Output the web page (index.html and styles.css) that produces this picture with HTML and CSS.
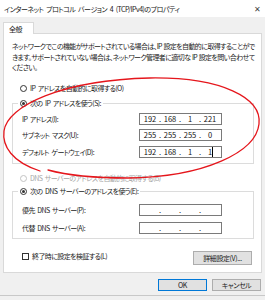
FILE: index.html
```html
<!DOCTYPE html>
<html lang="ja">
<head>
    <meta charset="UTF-8">
    <title>インターネット プロトコル バージョン 4 (TCP/IPv4)のプロパティ</title>
    <link rel="stylesheet" href="styles.css">
</head>
<body>
<div class="dialog">
    <div class="titlebar">
        <span class="title">インターネット プロトコル バージョン 4 (TCP/IPv4)のプロパティ</span>
        <span class="close">✕</span>
    </div>

    <div class="tabs">
        <div class="tab">全般</div>
    </div>

    <div class="panel">
        <p class="desc">ネットワークでこの機能がサポートされている場合は、IP 設定を自動的に取得することができます。サポートされていない場合は、ネットワーク管理者に適切な IP 設定を問い合わせてください。</p>

        <div class="option"><span class="radio"></span>IP アドレスを自動的に取得する(O)</div>

        <fieldset class="group group-ip">
            <legend class="option"><span class="radio checked"></span>次の IP アドレスを使う(S):</legend>
            <div class="row">
                <span class="label">IP アドレス(I):</span>
                <div class="ipbox"><span>192</span><i>.</i><span>168</span><i>.</i><span>1</span><i>.</i><span>221</span></div>
            </div>
            <div class="row">
                <span class="label">サブネット マスク(U):</span>
                <div class="ipbox"><span>255</span><i>.</i><span>255</span><i>.</i><span>255</span><i>.</i><span>0</span></div>
            </div>
            <div class="row">
                <span class="label">デフォルト ゲートウェイ(D):</span>
                <div class="ipbox"><span>192</span><i>.</i><span>168</span><i>.</i><span>1</span><i>.</i><span class="caret">1</span></div>
            </div>
        </fieldset>

        <div class="option disabled"><span class="radio"></span>DNS サーバーのアドレスを自動的に取得する(B)</div>

        <fieldset class="group group-dns">
            <legend class="option"><span class="radio checked"></span>次の DNS サーバーのアドレスを使う(E):</legend>
            <div class="row">
                <span class="label">優先 DNS サーバー(P):</span>
                <div class="ipbox"><span></span><i>.</i><span></span><i>.</i><span></span><i>.</i><span></span></div>
            </div>
            <div class="row">
                <span class="label">代替 DNS サーバー(A):</span>
                <div class="ipbox"><span></span><i>.</i><span></span><i>.</i><span></span><i>.</i><span></span></div>
            </div>
        </fieldset>

        <div class="bottom-row">
            <div class="option check-option"><span class="checkbox"></span>終了時に設定を検証する(L)</div>
            <button class="btn btn-detail">詳細設定(V)...</button>
        </div>
    </div>

    <div class="footer">
        <button class="btn btn-main default">OK</button>
        <button class="btn btn-main">キャンセル</button>
    </div>
    <div class="edge"></div>

    <svg class="mark" width="265" height="300" viewBox="0 0 265 300">
        <path d="M 40 171 C 12 162, 2 146, 4 131 C 7 106, 62 80, 150 78 C 222 77, 262 98, 259 124 C 256 152, 205 177, 128 178 C 100 178, 70 176, 48 170"
              fill="none" stroke="#e5161c" stroke-width="1.3" stroke-linecap="round"/>
    </svg>
</div>
</body>
</html>
```

FILE: styles.css
```css
* {
    margin: 0;
    padding: 0;
    box-sizing: border-box;
}

body {
    width: 265px;
    height: 300px;
    overflow: hidden;
    background: #f0f0f0;
    font-family: "Noto Sans CJK JP", "Noto Sans", sans-serif;
    font-size: 7px;
    letter-spacing: -0.6px;
    word-spacing: 1.5px;
    font-feature-settings: "palt";
    color: #1a1a1a;
}

.dialog {
    position: relative;
    height: 300px;
}

/* タイトルバー */
.titlebar {
    height: 17px;
    background: #fff;
    display: flex;
    align-items: center;
    justify-content: space-between;
    padding: 0 4px 0 4px;
}

.title {
    font-size: 7px;
    letter-spacing: -0.5px;
    color: #222;
}

.close {
    font-size: 8px;
    color: #444;
    margin-right: 1px;
}

/* タブ */
.tabs {
    display: flex;
    padding: 5px 0 0 3px;
}

.tab {
    width: 31px;
    height: 12px;
    margin-bottom: -1px;
    padding: 1px 0 0 5px;
    background: #fff;
    border: 1px solid #d9d9d9;
    border-bottom: none;
    position: relative;
    z-index: 1;
    line-height: 10px;
}

.panel {
    margin: 0 3px;
    height: 240px;
    background: #fff;
    border: 1px solid #d9d9d9;
    padding: 7px 0 0 0;
}

.desc {
    padding: 0 6px 0 8px;
    line-height: 10.5px;
    word-spacing: 0.5px;
}

/* ラジオ・チェック */
.option {
    display: flex;
    align-items: center;
    height: 11px;
    line-height: 11px;
    white-space: nowrap;
}

.panel > .option {
    padding-left: 16px;
}

.radio {
    width: 7px;
    height: 7px;
    border: 1px solid #333;
    border-radius: 50%;
    margin-right: 3px;
    display: flex;
    align-items: center;
    justify-content: center;
    background: #fff;
}

.radio.checked::after {
    content: "";
    width: 3px;
    height: 3px;
    border-radius: 50%;
    background: #333;
}

.disabled {
    color: #a6a6a6;
}

.disabled .radio {
    border-color: #c3c3c3;
}

.checkbox {
    width: 7px;
    height: 7px;
    border: 1px solid #333;
    margin-right: 3px;
}

.panel > .option:first-of-type {
    margin-top: 10px;
}

/* グループ */
.group {
    margin: 4px 7px 0 8px;
    border: 1px solid #dcdcdc;
    padding: 0 0 5px 0;
}

.group legend {
    margin-left: 5px;
    padding: 0 2px;
    background: #fff;
}

.group-ip {
    padding-top: 4px;
}

.group-dns {
    margin-top: 2px;
    padding-top: 7px;
    padding-bottom: 4px;
}

.disabled.option {
    margin-top: 9px;
}

.row {
    display: flex;
    align-items: center;
    justify-content: space-between;
    padding: 0 31px 0 9px;
    height: 12px;
}

.row + .row {
    margin-top: 4.5px;
}

.group-dns .row + .row {
    margin-top: 6px;
}

.ipbox {
    width: 83px;
    height: 12px;
    border: 1px solid #7a7a7a;
    display: flex;
    align-items: center;
    padding-left: 2px;
    font-size: 7.5px;
    letter-spacing: 0;
    word-spacing: 0;
    line-height: 10px;
    color: #111;
}

.ipbox span {
    width: 16px;
    text-align: center;
}

.ipbox i {
    font-style: normal;
    width: 4px;
    text-align: center;
}

.caret {
    position: relative;
}

.caret::after {
    content: "";
    position: absolute;
    top: 0;
    left: 10px;
    width: 1px;
    height: 10px;
    background: #000;
}

/* 下部 */
.bottom-row {
    display: flex;
    justify-content: space-between;
    align-items: center;
    margin-top: 12px;
    padding: 0 9px 0 18px;
}

.check-option {
    margin-bottom: 3px;
}

.btn {
    font-family: inherit;
    font-size: 7px;
    letter-spacing: -0.4px;
    font-feature-settings: "palt";
    color: #1a1a1a;
    background: #e1e1e1;
    border: 1px solid #adadad;
    line-height: 10px;
}

.btn-detail {
    width: 59px;
    height: 14px;
}

.footer {
    display: flex;
    justify-content: flex-end;
    gap: 5px;
    padding: 6px 4px 0 0;
}

.btn-main {
    width: 49px;
    height: 12px;
}

.btn.default {
    border-color: #0078d7;
}

.edge {
    margin-top: 4px;
    border-top: 1px solid #c8c8c8;
}

.mark {
    position: absolute;
    left: 0;
    top: 0;
    pointer-events: none;
}
```
